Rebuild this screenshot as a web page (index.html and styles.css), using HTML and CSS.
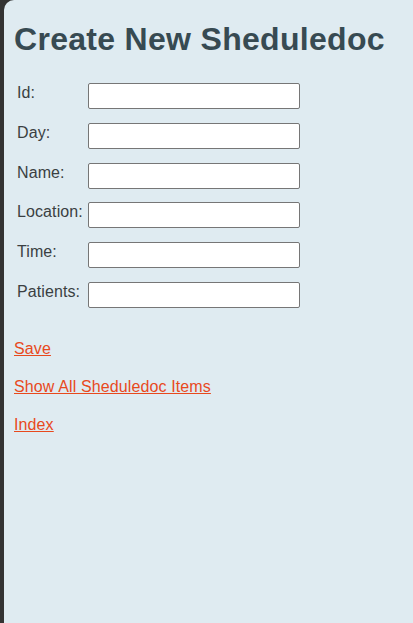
FILE: index.html
```html
<!DOCTYPE html>
<html>
<head>
<meta charset="utf-8">
<title>Create New Sheduledoc</title>
<link rel="stylesheet" href="styles.css">
</head>
<body>
<div class="page">
  <h1 class="title">Create New Sheduledoc</h1>
  <form class="form">
    <label class="label" for="id">Id:</label>
    <input class="field" id="id" type="text">
    <label class="label" for="day">Day:</label>
    <input class="field" id="day" type="text">
    <label class="label" for="name">Name:</label>
    <input class="field" id="name" type="text">
    <label class="label" for="location">Location:</label>
    <input class="field" id="location" type="text">
    <label class="label" for="time">Time:</label>
    <input class="field" id="time" type="text">
    <label class="label" for="patients">Patients:</label>
    <input class="field" id="patients" type="text">
  </form>
  <nav class="links">
    <a class="link" href="#">Save</a>
    <a class="link" href="#">Show All Sheduledoc Items</a>
    <a class="link" href="#">Index</a>
  </nav>
</div>
</body>
</html>
```
FILE: styles.css
```css
html, body {
  margin: 0;
  height: 100%;
}
body {
  background: #333333;
  font-family: "Liberation Sans", Arial, sans-serif;
}
.page {
  margin-left: 4px;
  min-height: 100%;
  box-sizing: border-box;
  background: #dfebf1;
  border-top-left-radius: 10px;
  padding: 21px 10px 10px 10px;
}
.title {
  margin: 0;
  font-size: 32px;
  font-weight: bold;
  color: #374a52;
  line-height: 37px;
  letter-spacing: 0.3px;
}
.form {
  display: grid;
  grid-template-columns: 71px 212px;
  row-gap: 13.8px;
  margin-top: 25px;
  padding-left: 3px;
}
.label {
  font-size: 16px;
  line-height: 18px;
  color: #3a3f42;
  align-self: start;
  padding-top: 1px;
  letter-spacing: 0.1px;
}
.field {
  box-sizing: border-box;
  width: 212px;
  height: 26px;
  margin: 0;
  border: 1px solid #767676;
  border-radius: 2px;
  background: #ffffff;
  padding: 2px 4px;
  font: 16px "Liberation Sans", Arial, sans-serif;
}
.links {
  display: flex;
  flex-direction: column;
  align-items: flex-start;
  gap: 19.5px;
  margin-top: 32px;
}
.link {
  font-size: 16px;
  line-height: 18.5px;
  color: #e8491d;
  text-decoration: underline;
  letter-spacing: 0.12px;
}
```
